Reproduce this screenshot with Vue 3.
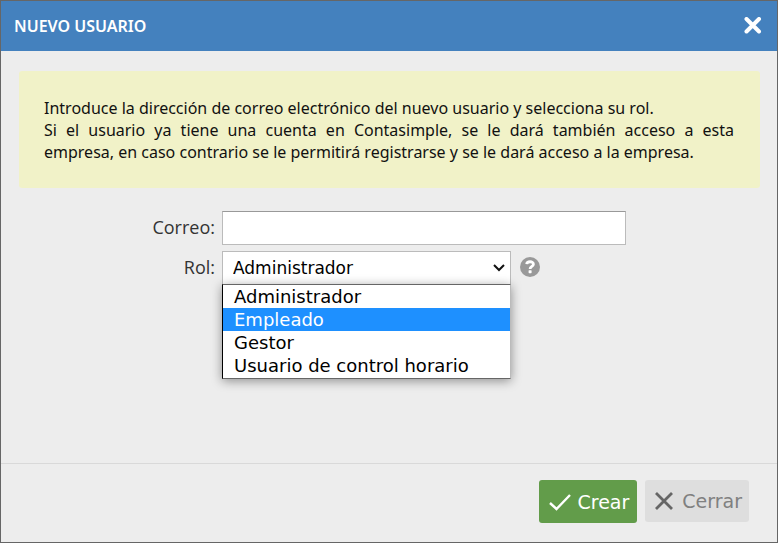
<script setup>
import { ref } from 'vue'

const roles = ['Administrador', 'Empleado', 'Gestor', 'Usuario de control horario']
const email = ref('')
const role = ref('Administrador')
const highlighted = ref('Empleado')
</script>

<template>
  <form class="dialog" role="dialog" aria-labelledby="dialog-title" @submit.prevent>
    <header class="titlebar">
      <h1 id="dialog-title">NUEVO USUARIO</h1>
      <button type="button" class="dismiss" aria-label="Cerrar ventana">
        <svg width="18" height="18" viewBox="0 0 18 18" aria-hidden="true">
          <path d="M2.5 2L15 14.5M15 2L2.5 14.5" fill="none" stroke="#fff" stroke-width="4" stroke-linecap="round" />
        </svg>
      </button>
    </header>

    <main class="content">
      <div class="note">
        <p>Introduce la dirección de correo electrónico del nuevo usuario y selecciona su rol.</p>
        <p>
          Si el usuario ya tiene una cuenta en Contasimple, se le dará también acceso a esta
          empresa,&nbsp;en caso contrario se le permitirá registrarse y se le dará acceso a la empresa.
        </p>
      </div>

      <div class="fields">
        <label for="email">Correo:</label>
        <input id="email" v-model="email" class="control" type="text" />

        <label for="role">Rol:</label>
        <div class="role-row">
          <div class="picker">
            <select id="role" v-model="role" class="control">
              <option v-for="r in roles" :key="r">{{ r }}</option>
            </select>
            <svg class="chevron" width="12" height="8" viewBox="0 0 12 8" aria-hidden="true">
              <path d="M1 1L6 6L11 1" fill="none" stroke="#111" stroke-width="2" />
            </svg>
            <ul class="menu" role="listbox" aria-label="Rol">
              <li
                v-for="r in roles"
                :key="r"
                role="option"
                :aria-selected="r === highlighted"
                :class="{ active: r === highlighted }"
                @mouseenter="highlighted = r"
                @click="role = r"
              >{{ r }}</li>
            </ul>
          </div>
          <button type="button" class="help" aria-label="Ayuda">
            <svg width="20" height="20" viewBox="0 0 20 20" aria-hidden="true">
              <circle cx="10" cy="10" r="10" fill="#999" />
              <path d="M6.7 7.2C7 4 13.4 3.9 13.4 7.2C13.4 9.6 10.1 9.3 10.1 12" fill="none" stroke="#fff" stroke-width="2.8" />
              <rect x="8.6" y="13.2" width="3" height="3" rx="0.6" fill="#fff" />
            </svg>
          </button>
        </div>
      </div>
    </main>

    <footer class="actions">
      <button type="submit" class="btn create">
        <svg width="22" height="18" viewBox="0 0 22 18" aria-hidden="true">
          <path d="M1 10L7.5 16L21 2" fill="none" stroke="#fff" stroke-width="2.4" />
        </svg>
        Crear
      </button>
      <button type="button" class="btn close">
        <svg width="18" height="18" viewBox="0 0 18 18" aria-hidden="true">
          <path d="M1 1L17 17M17 1L1 17" fill="none" stroke="#666" stroke-width="2.8" />
        </svg>
        Cerrar
      </button>
    </footer>
  </form>
</template>

<style>
body {
  background: #ededed;
}
</style>

<style scoped>
* {
  box-sizing: border-box;
}

.dialog {
  display: flex;
  flex-direction: column;
  min-height: 100vh;
  border: 1px solid #666;
  background: #ededed;
  color: #111;
  font-family: "Noto Sans", "Open Sans", sans-serif;
}

.titlebar {
  display: flex;
  align-items: center;
  justify-content: space-between;
  height: 50px;
  padding: 0 15px 0 13px;
  background: #4481be;
}

h1 {
  margin: 0;
  color: #fff;
  font-family: "Noto Sans", "Open Sans", sans-serif;
  font-size: 16px;
  font-weight: 600;
}

button {
  border: 0;
  padding: 0;
  background: none;
  cursor: pointer;
}

svg {
  display: block;
  flex: none;
}

.content {
  flex: 1;
  padding: 20px 17px 20px 18px;
}

.note {
  padding: 26px 26px 25px 25px;
  border-radius: 3px;
  background: #f1f2c8;
  font-size: 16px;
  line-height: 22px;
  text-align: justify;
}

.note p {
  margin: 0;
}

.fields {
  display: grid;
  grid-template-columns: 196px 1fr;
  align-items: center;
  gap: 6px 7px;
  margin-top: 23px;
}

label {
  color: #333;
  font-family: "Open Sans", sans-serif;
  font-size: 18px;
  font-weight: 500;
  line-height: 24px;
  padding-bottom: 2px;
  text-align: right;
}

.control {
  width: 100%;
  height: 34px;
  border: 1px solid #bbb;
  border-radius: 0;
  padding: 0 10px;
  background: #fff;
  color: #000;
  font-family: "DejaVu Sans", sans-serif;
  font-size: 17px;
  outline: none;
}

#email {
  max-width: 404px;
  border-top-color: #999;
}

#role {
  appearance: none;
}

.role-row {
  display: flex;
  align-items: center;
  gap: 9px;
}

.help {
  margin-bottom: 2px;
}

.picker {
  position: relative;
  width: 289px;
}

.chevron {
  position: absolute;
  top: 13px;
  right: 6px;
  pointer-events: none;
}

.menu {
  position: absolute;
  top: 33px;
  left: 0;
  right: 0;
  margin: 0;
  padding: 0 0 1px;
  border: 1px solid #666;
  border-left-color: #000;
  border-right-color: #bbb;
  background: #fff;
  box-shadow: 0 2px 10px rgba(0, 0, 0, 0.4);
  color: #000;
  font-family: "DejaVu Sans", sans-serif;
  font-size: 18px;
  line-height: 23px;
  list-style: none;
}

.menu li {
  padding: 0 11px;
  white-space: nowrap;
}

.menu .active {
  background: #1e90ff;
  color: #fff;
}

.actions {
  display: flex;
  align-items: flex-start;
  justify-content: flex-end;
  gap: 8px;
  padding: 16px 28px 19px;
  border-top: 1px solid #d9d9d9;
}

.btn {
  display: flex;
  align-items: center;
  height: 42px;
  border-radius: 3px;
  font-family: "DejaVu Sans", sans-serif;
  font-size: 19px;
}

.create {
  gap: 6px;
  height: 43px;
  padding: 0 8px 0 10px;
  background: #629c4a;
  color: #fff;
}

.close {
  gap: 9px;
  padding: 0 7px 0 10px;
  background: #dedede;
  color: #808080;
}
</style>
